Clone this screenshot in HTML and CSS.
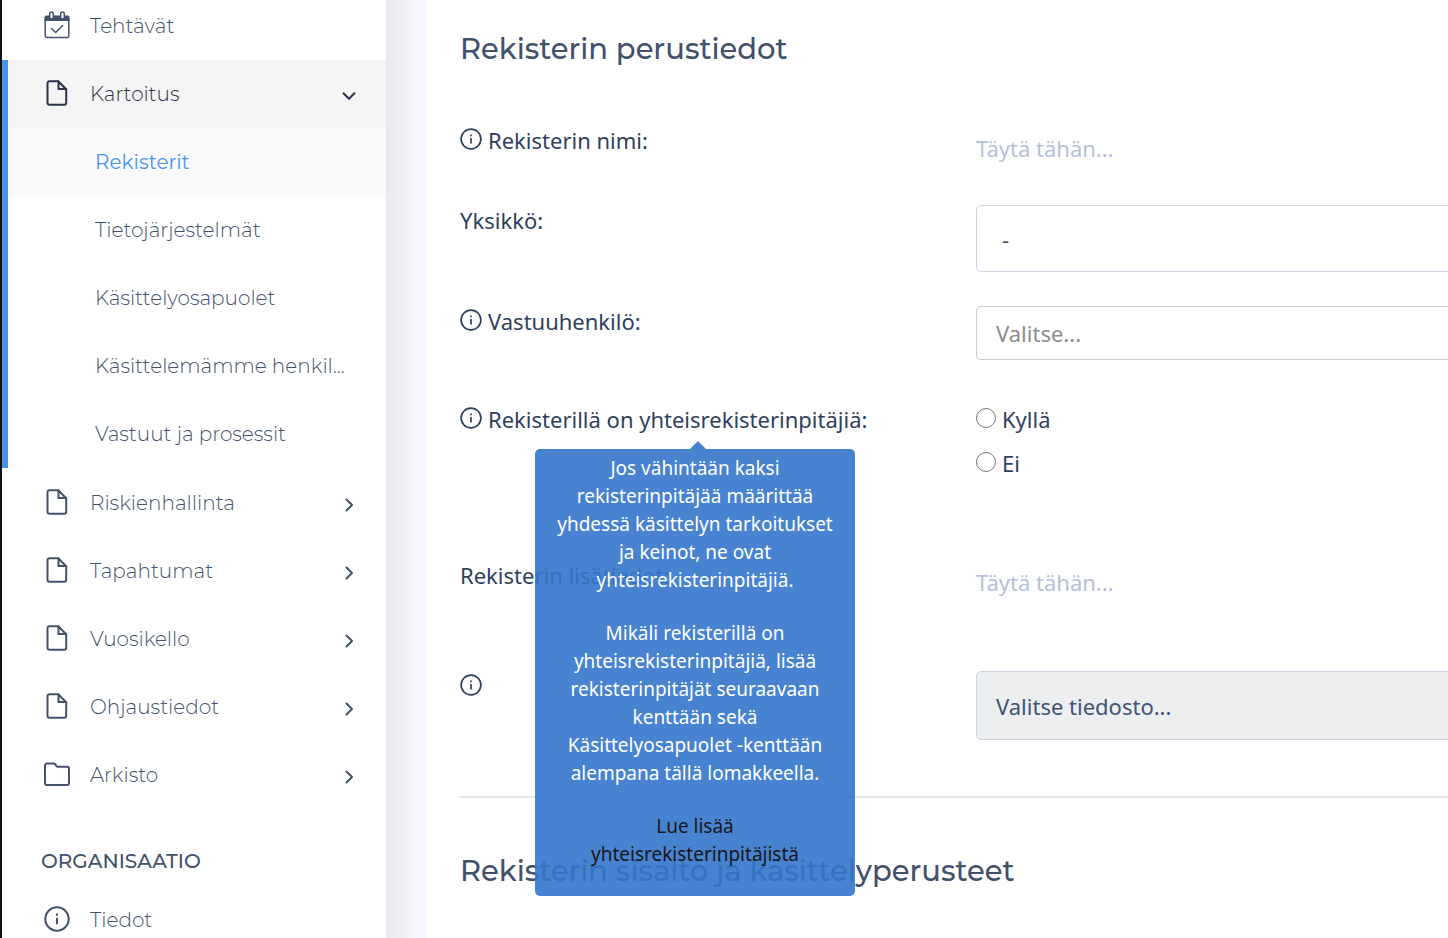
FILE: index.html
```html
<!DOCTYPE html>
<html lang="fi">
<head>
    <meta charset="UTF-8">
    <meta name="viewport" content="width=device-width, initial-scale=1.0">
    <title>Rekisterit</title>
    <link rel="stylesheet" href="styles.css">
</head>
<body>
<svg class="sprite" aria-hidden="true">
    <symbol id="i-file" viewBox="0 0 26 26">
        <path d="M5.500 1.200h8.700l8 8v13.600a2 2 0 0 1-2 2H5.500a2 2 0 0 1-2-2V3.200a2 2 0 0 1 2-2z"/>
        <path d="M14.500 1.500v7.500h7.500"/>
    </symbol>
    <symbol id="i-folder" viewBox="0 0 26 26">
        <path d="M3 2.500h6.500a2 2 0 0 1 1.500.7l1.500 1.900a1.500 1.500 0 0 0 1.200.6H23a2 2 0 0 1 2 2V22a2 2 0 0 1-2 2H3a2 2 0 0 1-2-2V4.500a2 2 0 0 1 2-2z"/>
    </symbol>
    <symbol id="i-info" viewBox="0 0 26 26">
        <circle cx="13" cy="13" r="11.700"/>
        <path d="M13 12.500v5M13 8.300v.6"/>
    </symbol>
    <symbol id="i-right" viewBox="0 0 16 16">
        <path d="M5.500 2.500L11 8l-5.500 5.500"/>
    </symbol>
    <symbol id="i-down" viewBox="0 0 16 16">
        <path d="M2.500 5.200L8 10.700l5.500-5.500"/>
    </symbol>
</svg>
<div class="page">
    <nav class="sidebar">
        <ul>
            <li>
                <a href="#" class="item">
                    <svg class="icon" viewBox="0 0 26 28">
                        <path class="fill" d="M2 4.500h22a1.500 1.500 0 0 1 1.500 1.500v4h-25V6A1.500 1.500 0 0 1 2 4.500z"/>
                        <path class="thin" d="M1.200 8v17a1.500 1.500 0 0 0 1.500 1.500h20.600a1.500 1.500 0 0 0 1.500-1.500V8"/>
                        <rect class="ring" x="5.700" y="1" width="3.600" height="7" rx="1.800"/>
                        <rect class="ring" x="16.700" y="1" width="3.600" height="7" rx="1.800"/>
                        <path class="thin" d="M7.500 17.500l4.200 4 7-7"/>
                    </svg>
                    <span>Tehtävät</span>
                </a>
            </li>
            <li class="open">
                <a href="#" class="item">
                    <svg class="icon"><use href="#i-file"/></svg>
                    <span>Kartoitus</span>
                    <svg class="arrow"><use href="#i-down"/></svg>
                </a>
                <ul class="sub">
                    <li><a href="#" class="current">Rekisterit</a></li>
                    <li><a href="#">Tietojärjestelmät</a></li>
                    <li><a href="#">Käsittelyosapuolet</a></li>
                    <li><a href="#">Käsittelemämme henkil...</a></li>
                    <li><a href="#">Vastuut ja prosessit</a></li>
                </ul>
            </li>
            <li>
                <a href="#" class="item">
                    <svg class="icon"><use href="#i-file"/></svg>
                    <span>Riskienhallinta</span>
                    <svg class="arrow"><use href="#i-right"/></svg>
                </a>
            </li>
            <li>
                <a href="#" class="item">
                    <svg class="icon"><use href="#i-file"/></svg>
                    <span>Tapahtumat</span>
                    <svg class="arrow"><use href="#i-right"/></svg>
                </a>
            </li>
            <li>
                <a href="#" class="item">
                    <svg class="icon"><use href="#i-file"/></svg>
                    <span>Vuosikello</span>
                    <svg class="arrow"><use href="#i-right"/></svg>
                </a>
            </li>
            <li>
                <a href="#" class="item">
                    <svg class="icon"><use href="#i-file"/></svg>
                    <span>Ohjaustiedot</span>
                    <svg class="arrow"><use href="#i-right"/></svg>
                </a>
            </li>
            <li>
                <a href="#" class="item">
                    <svg class="icon"><use href="#i-folder"/></svg>
                    <span>Arkisto</span>
                    <svg class="arrow"><use href="#i-right"/></svg>
                </a>
            </li>
        </ul>
        <h3>ORGANISAATIO</h3>
        <ul>
            <li>
                <a href="#" class="item">
                    <svg class="icon"><use href="#i-info"/></svg>
                    <span>Tiedot</span>
                </a>
            </li>
        </ul>
    </nav>
    <main class="content">
        <form class="form">
            <h2>Rekisterin perustiedot</h2>
            <div class="row">
                <label class="name" for="nimi"><svg class="info"><use href="#i-info"/></svg>Rekisterin nimi:</label>
                <input class="plain" type="text" id="nimi" placeholder="Täytä tähän...">
            </div>
            <div class="row">
                <label class="name" for="yksikko">Yksikkö:</label>
                <select class="box unit" id="yksikko">
                    <option>-</option>
                </select>
            </div>
            <div class="row row-person">
                <label class="name" for="vastuu"><svg class="info"><use href="#i-info"/></svg>Vastuuhenkilö:</label>
                <select class="box person" id="vastuu">
                    <option>Valitse...</option>
                </select>
            </div>
            <div class="row row-joint" role="radiogroup" aria-labelledby="yhteis">
                <div class="name">
                    <svg class="info"><use href="#i-info"/></svg><span id="yhteis">Rekisterillä on yhteisrekisterinpitäjiä:</span>
                    <div class="tooltip" role="tooltip">
                        <p>Jos vähintään kaksi rekisterinpitäjää määrittää yhdessä käsittelyn tarkoitukset ja keinot, ne ovat yhteisrekisterinpitäjiä.</p>
                        <p>Mikäli rekisterillä on yhteisrekisterinpitäjiä, lisää rekisterinpitäjät seuraavaan kenttään sekä Käsittelyosapuolet -kenttään alempana tällä lomakkeella.</p>
                        <p><a href="#">Lue lisää yhteisrekisterinpitäjistä</a></p>
                    </div>
                </div>
                <div class="choices">
                    <label><input type="radio" name="yhteis">Kyllä</label>
                    <label><input type="radio" name="yhteis">Ei</label>
                </div>
            </div>
            <div class="row">
                <label class="name" for="lisatiedot">Rekisterin lisätiedot:</label>
                <textarea class="plain" id="lisatiedot" placeholder="Täytä tähän..."></textarea>
            </div>
            <div class="row">
                <label class="name" for="tiedosto"><svg class="info"><use href="#i-info"/></svg></label>
                <button class="box file" type="button" id="tiedosto">Valitse tiedosto...</button>
            </div>
            <hr>
            <h2>Rekisterin sisältö ja käsittelyperusteet</h2>
        </form>
    </main>
</div>
</body>
</html>
```

FILE: styles.css
```css
*{
    margin: 0;
    padding: 0;
    box-sizing: border-box;
}
body{
    height: 100vh;
    overflow: hidden;
    font-family: "Noto Sans", "Open Sans", sans-serif;
    font-size: 22px;
    line-height: 30px;
    color: #2f3f5c;
    background: #f4f6fb;
}
ul{
    list-style: none;
}
a{
    text-decoration: none;
}
svg{
    fill: none;
    stroke: currentColor;
    stroke-width: 2;
    stroke-linecap: round;
    stroke-linejoin: round;
    flex: none;
}
.sprite{
    display: none;
}
.page{
    display: flex;
    height: 100%;
}

/* sidebar */
.sidebar{
    width: 386px;
    flex: none;
    border-left: 2px solid #111;
    background: #fff;
    font-family: Montserrat, Inter, sans-serif;
    font-size: 20px;
    font-weight: 300;
    color: #44516a;
    overflow: hidden;
}
.sidebar > ul:first-child{
    margin-top: -8px;
}
.sidebar a{
    color: inherit;
}
.item{
    display: flex;
    align-items: center;
    height: 68px;
    padding: 0 29px 0 42px;
}
.item span{
    flex: 1;
    margin-left: 20px;
}
.icon{
    width: 26px;
    height: 28px;
    margin-bottom: 2px;
}
.icon .fill{
    fill: currentColor;
    stroke: none;
}
.icon .thin{
    stroke-width: 1.5;
}
.icon .ring{
    fill: #fff;
    stroke-width: 1.5;
}
.arrow{
    width: 16px;
    height: 16px;
    margin-top: 4px;
}
.open{
    border-left: 6px solid #4695ec;
    margin-bottom: 1px;
}
.open .item{
    padding-left: 36px;
    background: #f4f4f4;
    color: #2b3346;
}
.sub a{
    display: block;
    padding-left: 87px;
    line-height: 68px;
    white-space: nowrap;
}
.sub .current{
    background: #fafafa;
    color: #4695ec;
    font-weight: 400;
}
.sidebar h3{
    padding: 37px 0 10px 39px;
    font-size: 20px;
    line-height: 30px;
    font-weight: 500;
}

/* form */
.content{
    flex: 1;
    min-width: 0;
    padding-left: 40px;
    background: linear-gradient(to right, #e8eaee, #f4f6fb 30px);
    overflow: hidden;
}
.form{
    width: calc(100% + 60px);
    min-height: 100%;
    padding: 29px 0 0 34px;
    background: #fff;
}
.form h2{
    font-family: Montserrat, Inter, sans-serif;
    font-size: 29px;
    font-weight: 500;
    line-height: 40px;
    color: #43506a;
    margin-bottom: 56px;
}
.row{
    display: grid;
    grid-template-columns: 516px 1fr;
    align-items: start;
    margin-bottom: 34px;
}
.row-person{
    min-height: 64px;
}
.row-joint{
    min-height: 122px;
}
.name{
    position: relative;
    display: flex;
}
.info{
    width: 22px;
    height: 22px;
    margin: 3px 6px 0 0;
}
.plain{
    width: 100%;
    height: 46px;
    border: 0;
    background: none;
    font: inherit;
    color: inherit;
    resize: none;
}
textarea.plain{
    height: 77px;
    padding-top: 7px;
}
.plain::placeholder{
    color: #b4c1d9;
}
.box{
    width: 100%;
    border: 1px solid #cbd5e2;
    border-radius: 5px;
    background: #fff;
    font: inherit;
    color: #415475;
    text-align: left;
    appearance: none;
}
.unit{
    height: 67px;
    padding-left: 25px;
}
.person{
    height: 54px;
    padding-left: 19px;
    border-color: #ccc;
    color: #8c8c8c;
}
.file{
    height: 69px;
    padding-left: 19px;
    background: #edeef0;
}
.choices label{
    display: flex;
    margin-bottom: 14px;
}
.choices input{
    width: 20px;
    height: 20px;
    margin: 4px 6px 0 0;
}
hr{
    border: 0;
    border-top: 2px solid #e5e5e5;
    margin: 56px 0 53px;
}

/* tooltip under the label */
.tooltip{
    position: absolute;
    top: 45px;
    left: 75px;
    width: 320px;
    padding: 5px 16px 3px;
    border-radius: 5px;
    background: #3476cc;
    color: #fff;
    font-size: 19px;
    line-height: 28px;
    text-align: center;
    opacity: .9;
    z-index: 2;
}
.tooltip::before{
    content: "";
    position: absolute;
    top: -8px;
    left: 155px;
    border: 8px solid transparent;
    border-top: 0;
    border-bottom-color: #3476cc;
}
.tooltip p{
    margin-bottom: 25px;
}
.tooltip a{
    color: #000;
}
```
